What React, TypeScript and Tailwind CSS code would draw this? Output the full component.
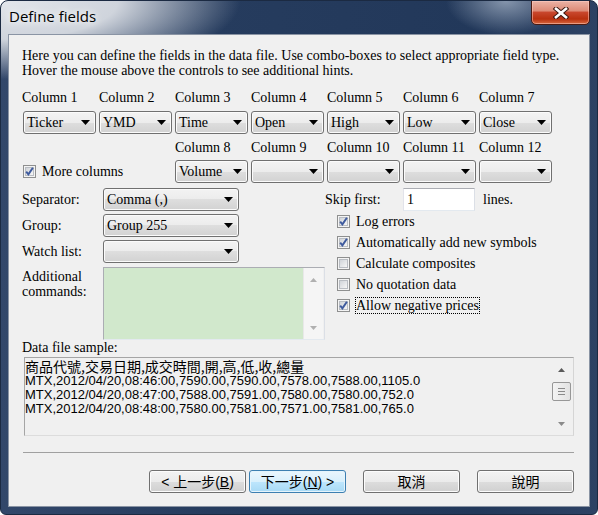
import React from 'react';

const COLS1 = [
  { label: 'Column 1', value: 'Ticker' },
  { label: 'Column 2', value: 'YMD' },
  { label: 'Column 3', value: 'Time' },
  { label: 'Column 4', value: 'Open' },
  { label: 'Column 5', value: 'High' },
  { label: 'Column 6', value: 'Low' },
  { label: 'Column 7', value: 'Close' },
];

const COLS2 = [
  { label: 'Column 8', value: 'Volume' },
  { label: 'Column 9', value: '' },
  { label: 'Column 10', value: '' },
  { label: 'Column 11', value: '' },
  { label: 'Column 12', value: '' },
];

const OPTIONS = [
  { label: 'Log errors', checked: true, focus: false },
  { label: 'Automatically add new symbols', checked: true, focus: false },
  { label: 'Calculate composites', checked: false, focus: false },
  { label: 'No quotation data', checked: false, focus: false },
  { label: 'Allow negative prices', checked: true, focus: true },
];

const SAMPLE = [
  'MTX,2012/04/20,08:46:00,7590.00,7590.00,7578.00,7588.00,1105.0',
  'MTX,2012/04/20,08:47:00,7588.00,7591.00,7580.00,7580.00,752.0',
  'MTX,2012/04/20,08:48:00,7580.00,7581.00,7571.00,7581.00,765.0',
];

function Arrow() {
  return (
    <svg width="9" height="5" viewBox="0 0 9 5" className="shrink-0">
      <path d="M0 0H9L4.5 5Z" fill="#000" />
    </svg>
  );
}

function Combo({ value = '', wide = false }: { value?: string; wide?: boolean }) {
  return (
    <div
      className={`flex h-[23px] items-center justify-between rounded-[3px] border border-[#707070] bg-[linear-gradient(#f3f3f3_0%,#ececec_50%,#dedede_50%,#d2d2d2_100%)] pl-[3px] pr-[5px] shadow-[inset_0_0_0_1px_#fbfbfb] ${wide ? 'w-[136px]' : 'w-[73px]'}`}
    >
      <span className="leading-[15px]">{value}</span>
      <Arrow />
    </div>
  );
}

function Check({ checked }: { checked: boolean }) {
  return (
    <span className="relative flex h-[13px] w-[13px] shrink-0 items-center justify-center border border-[#8e8f8f] bg-[#f4f4f4]">
      <span className="h-[9px] w-[9px] border border-[#b9bdc3] bg-[linear-gradient(135deg,#d0d4d9,#f6f6f6)]" />
      {checked && (
        <svg className="absolute left-0 top-0" width="11" height="11" viewBox="0 0 11 11">
          <path d="M2.2 5.6L4.4 8.3L8.9 1.8" fill="none" stroke="#3f5b9e" strokeWidth="2" />
        </svg>
      )}
    </span>
  );
}

function ScrollArrow({ up, color }: { up: boolean; color: string }) {
  return (
    <div className="flex h-[17px] items-center justify-center">
      <svg width="7" height="4" viewBox="0 0 7 4">
        <path d={up ? 'M0 4H7L3.5 0Z' : 'M0 0H7L3.5 4Z'} fill={color} />
      </svg>
    </div>
  );
}

function Button({ children, primary = false }: { children: React.ReactNode; primary?: boolean }) {
  return (
    <button
      className={`flex h-[23px] w-[97px] items-center justify-center rounded-[3px] border text-[14px] leading-[16px] ${
        primary
          ? 'border-[#3c7fb1] bg-[linear-gradient(#eaf6fd_0%,#d9f0fc_50%,#bee6fd_50%,#a7d9f5_100%)] shadow-[inset_0_0_0_1px_#e5f4fc]'
          : 'border-[#707070] bg-[linear-gradient(#f3f3f3_0%,#ebebeb_50%,#dddddd_50%,#d0d0d0_100%)] shadow-[inset_0_0_0_1px_#fcfcfc]'
      }`}
    >
      {children}
    </button>
  );
}

export default function App() {
  return (
    <div className="flex h-[515px] w-[598px] flex-col overflow-hidden rounded-t-[8px] rounded-b-[6px] border border-[#1b2a42] bg-[image:radial-gradient(ellipse_260px_85px_at_0px_0px,#e3e6eb_0%,#cfd4dc_45%,rgba(45,66,98,0)_92%),radial-gradient(ellipse_60px_34px_at_505px_0px,rgba(150,165,186,0.85)_0%,rgba(150,165,186,0)_100%),linear-gradient(90deg,#32476a_0%,#263c5e_35%,#22385a_80%,#2d4264_100%)]">
      {/* title bar */}
      <div className="flex h-[33px] shrink-0 items-start justify-between">
        <div className="pl-[8px] pt-[5px] font-['Open_Sans',sans-serif] text-[15px] leading-[20px] text-black [text-shadow:0_0_7px_#fff,0_0_12px_#fff]">
          Define fields
        </div>
        <div className="-mt-px mr-[7px] flex h-[25px] w-[59px] items-center justify-center rounded-b-[5px] border border-[#4b1a12] bg-[linear-gradient(#ebb3a6_0%,#dd8b77_42%,#c8462c_50%,#b8300f_78%,#d8683f_100%)] shadow-[inset_0_0_0_1px_rgba(255,210,200,0.5)]">
          <svg width="16" height="12" viewBox="0 0 16 12">
            <path d="M3 1.8L13 10.2M13 1.8L3 10.2" stroke="#3d1810" strokeWidth="4.6" strokeLinecap="square" />
            <path d="M3 1.8L13 10.2M13 1.8L3 10.2" stroke="#fff" strokeWidth="2.6" strokeLinecap="square" />
          </svg>
        </div>
      </div>

      {/* client area */}
      <div className="mx-[7px] mb-[7px] flex flex-1 flex-col border border-[#8a94a4] bg-[#f0f0f0] pl-[13px] pt-[13px] font-['Liberation_Serif','Noto_Sans_CJK_TC',serif] text-[14px] leading-[15px] text-black">
        <div>Here you can define the fields in the data file. Use combo-boxes to select appropriate field type.</div>
        <div>Hover the mouse above the controls to see additional hints.</div>

        {/* columns 1-7 */}
        <div className="ml-[1px] mt-[12px] grid grid-cols-[repeat(7,73px)] gap-x-[3px]">
          {COLS1.map((c, i) => (
            <div key={c.label} className={`h-[15px] ${i === 0 ? '-ml-px' : ''}`}>
              {c.label}
            </div>
          ))}
        </div>
        <div className="ml-[1px] mt-[6px] grid grid-cols-[repeat(7,73px)] gap-x-[3px]">
          {COLS1.map((c) => (
            <Combo key={c.label} value={c.value} />
          ))}
        </div>

        {/* columns 8-12 */}
        <div className="ml-[1px] mt-[6px] grid grid-cols-[repeat(7,73px)] gap-x-[3px]">
          <div className="col-span-2" />
          {COLS2.map((c) => (
            <div key={c.label} className="h-[15px] whitespace-nowrap">
              {c.label}
            </div>
          ))}
        </div>
        <div className="ml-[1px] mt-[5px] grid grid-cols-[repeat(7,73px)] gap-x-[3px]">
          <div className="col-span-2 flex items-center">
            <Check checked />
            <span className="ml-[5px] border border-transparent">More columns</span>
          </div>
          {COLS2.map((c) => (
            <Combo key={c.label} value={c.value} />
          ))}
        </div>

        {/* settings */}
        <div className="mt-[5px] flex">
          <div className="flex w-[303px] flex-col">
            <div className="flex items-center">
              <span className="w-[81px]">Separator:</span>
              <Combo value="Comma (,)" wide />
            </div>
            <div className="mt-[3px] flex items-center">
              <span className="w-[81px]">Group:</span>
              <Combo value="Group 255" wide />
            </div>
            <div className="mt-[3px] flex items-center">
              <span className="w-[81px]">Watch list:</span>
              <Combo wide />
            </div>
            <div className="mt-[4px] flex">
              <span className="w-[81px] pt-[2px]">
                Additional
                <br />
                commands:
              </span>
              <div className="flex h-[73px] w-[222px] border border-[#abadb3] border-b-[#e3e9ef] border-r-[#dbdfe6]">
                <div className="flex-1 bg-[#d1e8cc]" />
                <div className="mr-[1px] flex w-[20px] flex-col justify-between border-l border-[#e8e8e8] bg-[#f5f5f5] py-[3px]">
                  <ScrollArrow up color="#b0b0b0" />
                  <ScrollArrow up={false} color="#b0b0b0" />
                </div>
              </div>
            </div>
          </div>

          <div className="flex flex-1 flex-col">
            <div className="flex h-[23px] items-center">
              <span className="w-[78px]">Skip first:</span>
              <div className="flex h-[23px] w-[72px] items-center border border-[#abadb3] border-b-[#e3e9ef] border-l-[#e2e3ea] border-r-[#dbdfe6] bg-white pl-[3px]">
                1
              </div>
              <span className="ml-[8px]">lines.</span>
            </div>
            {OPTIONS.map((o) => (
              <div key={o.label} className="ml-[12px] flex h-[21px] items-center">
                <Check checked={o.checked} />
                <span
                  className={`ml-[5px] border ${o.focus ? 'border-dotted border-black' : 'border-transparent'}`}
                >
                  {o.label}
                </span>
              </div>
            ))}
          </div>
        </div>

        {/* sample */}
        <div className="h-[15px]">Data file sample:</div>
        <div className="ml-[2px] mt-[2px] flex h-[79px] w-[550px] border border-[#a5a5a5] border-b-[#dcdcdc] border-r-[#d5d5d5]">
          <div className="flex-1 pt-[1px] font-['Liberation_Sans','Noto_Sans_CJK_TC',sans-serif] text-[13px] leading-[14px]">
            <div className="h-[15px] font-['Noto_Sans_CJK_TC',sans-serif] text-[14px] leading-[15px]">
              商品代號,交易日期,成交時間,開,高,低,收,總量
            </div>
            {SAMPLE.map((s) => (
              <div key={s}>{s}</div>
            ))}
          </div>
          <div className="mr-[2px] flex w-[19px] flex-col py-[3px]">
            <ScrollArrow up color="#5a5a5a" />
            <div className="mt-[4px] flex h-[19px] flex-col items-center justify-center gap-[2px] rounded-[2px] border border-[#979797] bg-[linear-gradient(90deg,#f4f4f4,#e2e2e2)]">
              <div className="h-px w-[7px] bg-[#8a8a8a]" />
              <div className="h-px w-[7px] bg-[#8a8a8a]" />
              <div className="h-px w-[7px] bg-[#8a8a8a]" />
            </div>
            <div className="flex-1" />
            <ScrollArrow up={false} color="#8a8a8a" />
          </div>
        </div>

        <div className="ml-[1px] mt-[16px] h-px w-[551px] bg-[#a0a0a0]" />

        <div className="mt-[17px] flex justify-end gap-[3px] pr-[15px] font-['Liberation_Sans','Noto_Sans_CJK_TC',sans-serif]">
          <Button>
            &lt; 上一步(<span className="underline">B</span>)
          </Button>
          <Button primary>
            下一步(<span className="underline">N</span>) &gt;
          </Button>
          <div className="ml-[14px]">
            <Button>取消</Button>
          </div>
          <div className="ml-[14px]">
            <Button>說明</Button>
          </div>
        </div>
      </div>
    </div>
  );
}
